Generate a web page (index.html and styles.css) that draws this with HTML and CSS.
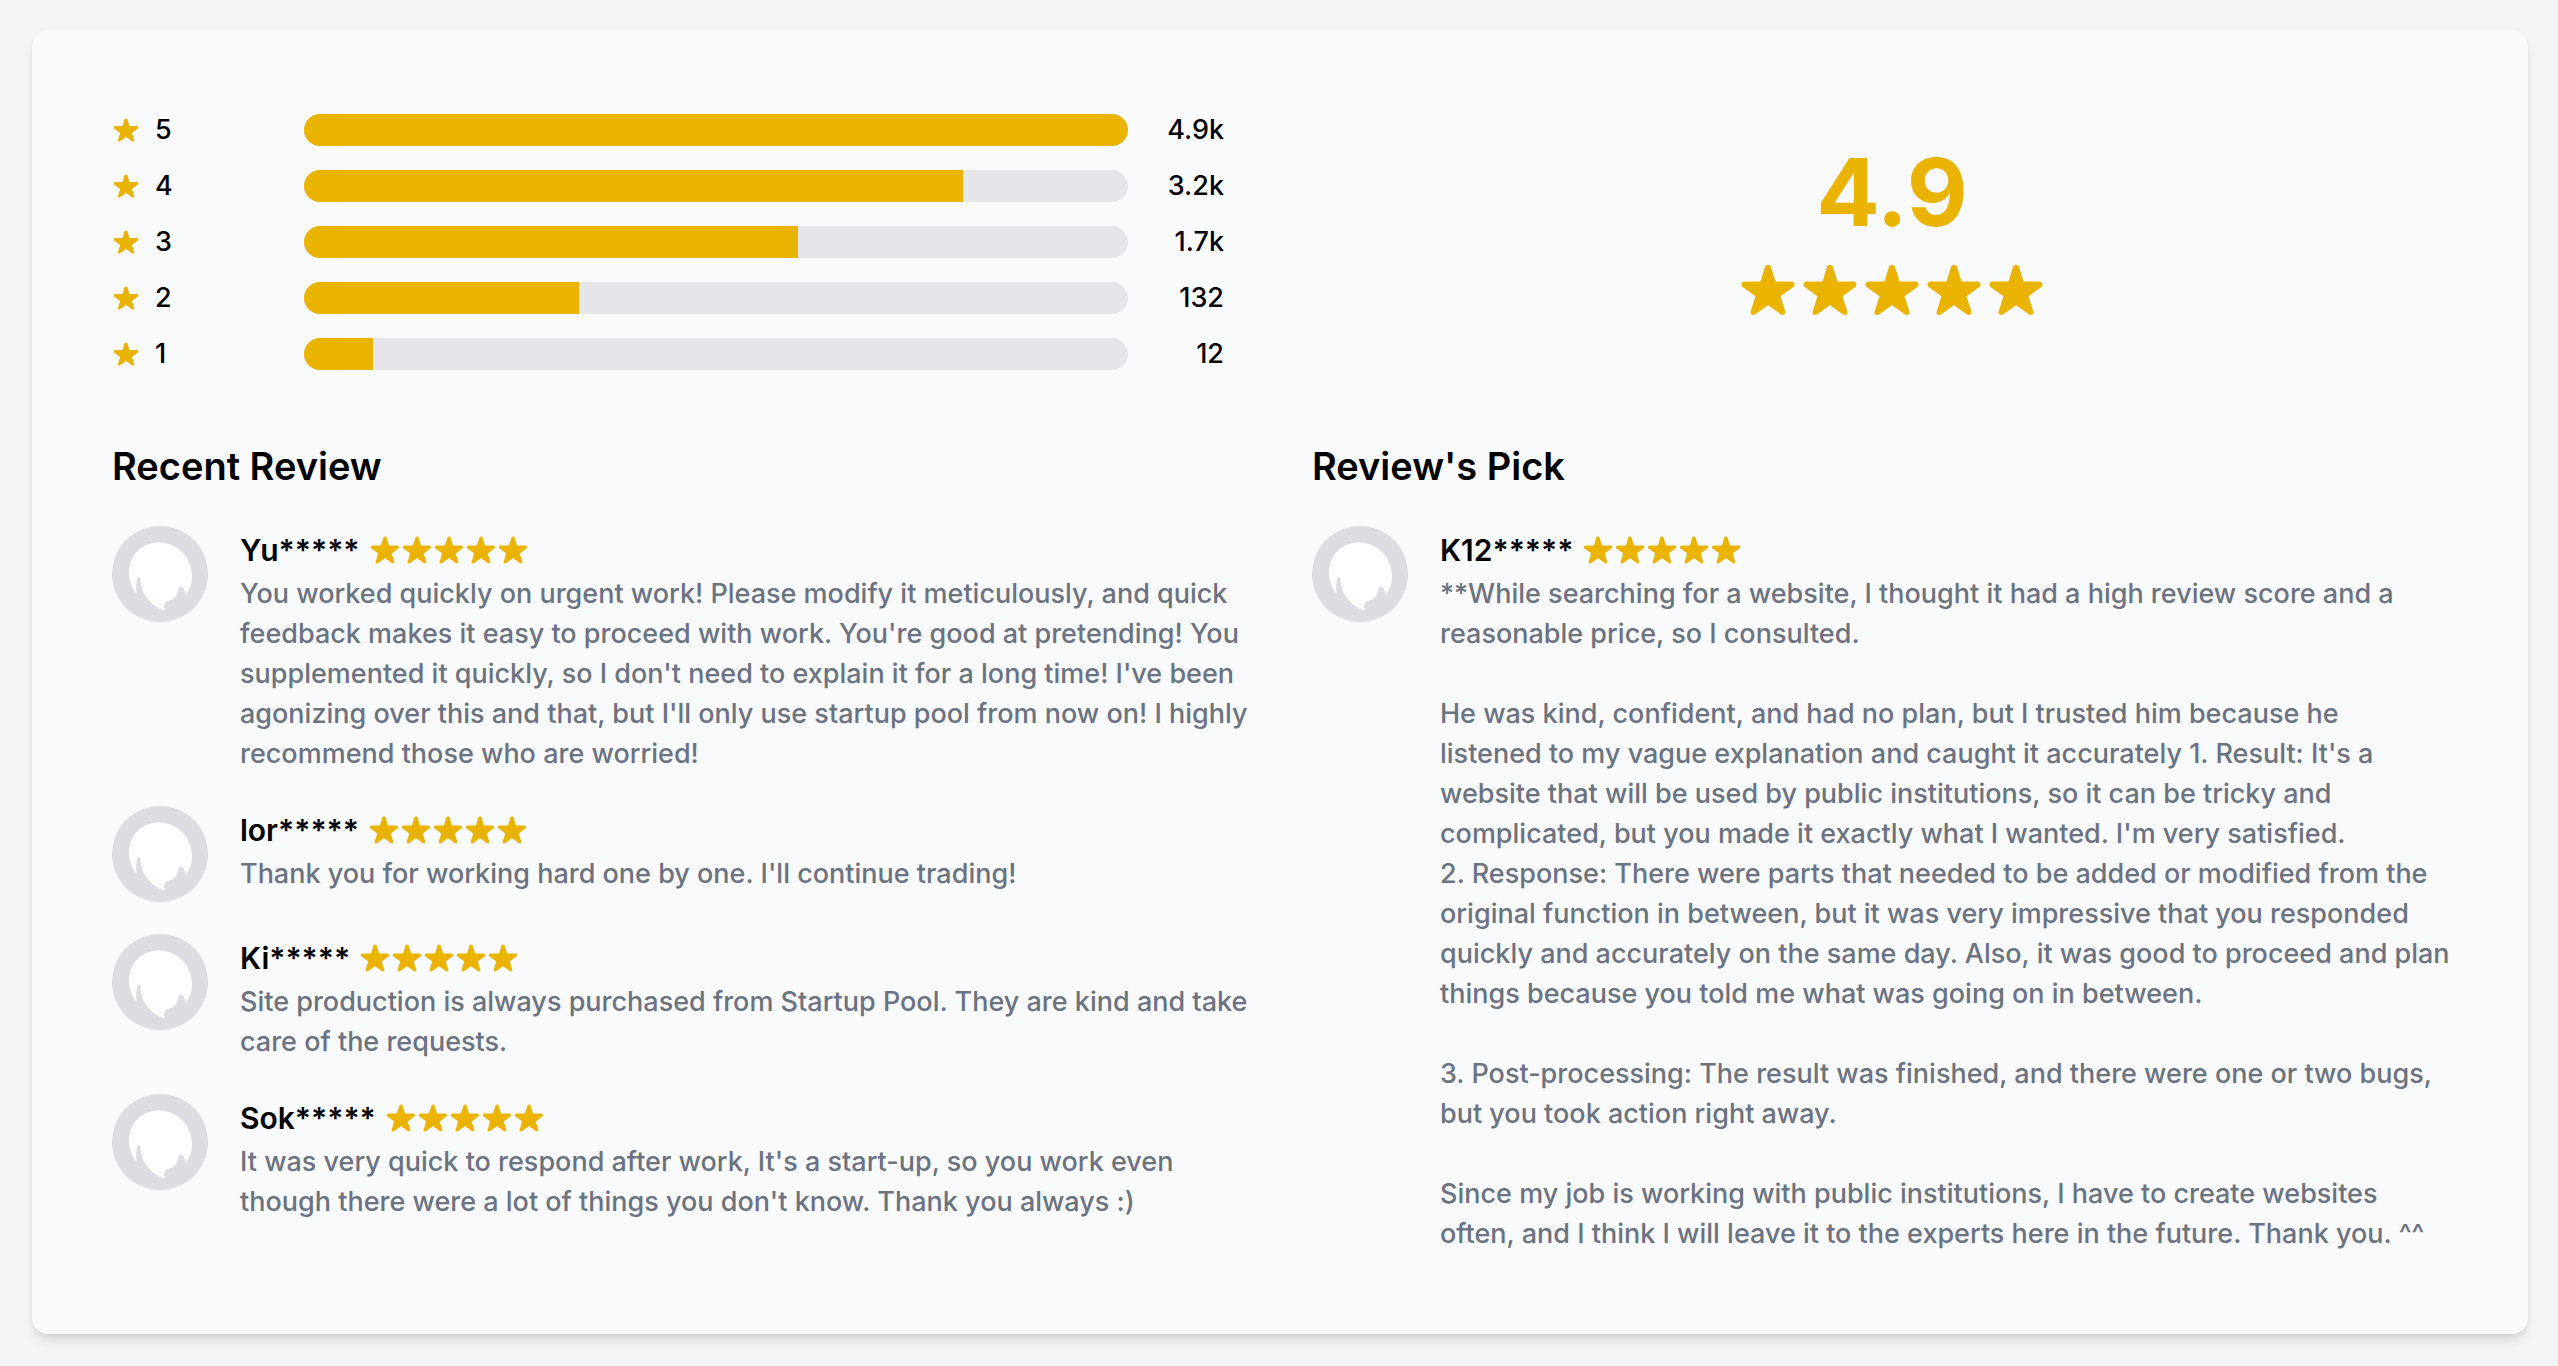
FILE: index.html
```html
<!DOCTYPE html>
<html lang="en">
<head>
<meta charset="utf-8">
<title>Reviews</title>
<link rel="stylesheet" href="styles.css">
</head>
<body>
<svg class="sprite" aria-hidden="true">
  <symbol id="star" viewBox="0 0 168 168">
    <path d="M75 15C77 7 91 7 93 15L106.500 58.500H154C164 59 167 70 159 76L121.500 103L136.500 150C138 158 129 162 122 157L84 130L46 157C39 162 30 158 31.500 150L46.500 103L9 76C1 70 4 59 14 58.500H61.500Z"/>
  </symbol>
  <symbol id="avatar" viewBox="0 0 96 96">
    <circle cx="48" cy="48" r="48" fill="#dcdde2"/>
    <path d="M24.500 68C20 62 17 54 17 47C17 29 30 16.500 47 16.500C66 16.500 80 32 80 50C80 57 78 63 73.500 69C73 64 71 60.500 69 60.500C65 60.500 67 67 64 70C61 76 52 73 52 80C52 82 53 83 52.500 84.500C42 82 28 69 28 52C27 49 25.500 51 25 54C24 59 24 64 24.500 68Z" fill="#fff"/>
  </symbol>
</svg>
<main class="card">
  <section class="summary">
    <ul class="bars">
      <li class="bar-row"><span class="grade"><svg><use href="#star"/></svg>5</span><span class="track"><span class="fill" style="width:100%"></span></span><span class="count">4.9k</span></li>
      <li class="bar-row"><span class="grade"><svg><use href="#star"/></svg>4</span><span class="track"><span class="fill" style="width:80%"></span></span><span class="count">3.2k</span></li>
      <li class="bar-row"><span class="grade"><svg><use href="#star"/></svg>3</span><span class="track"><span class="fill" style="width:60%"></span></span><span class="count">1.7k</span></li>
      <li class="bar-row"><span class="grade"><svg><use href="#star"/></svg>2</span><span class="track"><span class="fill" style="width:33.33%"></span></span><span class="count">132</span></li>
      <li class="bar-row"><span class="grade"><svg><use href="#star"/></svg>1</span><span class="track"><span class="fill" style="width:8.33%"></span></span><span class="count">12</span></li>
    </ul>
    <div class="score">
      <strong class="score-value">4.9</strong>
      <div class="score-stars"><svg><use href="#star"/></svg><svg><use href="#star"/></svg><svg><use href="#star"/></svg><svg><use href="#star"/></svg><svg><use href="#star"/></svg></div>
    </div>
  </section>
  <div class="columns">
    <section class="reviews">
      <h2>Recent Review</h2>
      <article class="review">
        <svg class="avatar"><use href="#avatar"/></svg>
        <div class="body">
          <div class="head"><h3>Yu*****</h3><div class="stars"><svg><use href="#star"/></svg><svg><use href="#star"/></svg><svg><use href="#star"/></svg><svg><use href="#star"/></svg><svg><use href="#star"/></svg></div></div>
          <p>You worked quickly on urgent work! Please modify it meticulously, and quick<br>feedback makes it easy to proceed with work. You're good at pretending! You<br>supplemented it quickly, so I don't need to explain it for a long time! I've been<br>agonizing over this and that, but I'll only use startup pool from now on! I highly<br>recommend those who are worried!</p>
        </div>
      </article>
      <article class="review">
        <svg class="avatar"><use href="#avatar"/></svg>
        <div class="body">
          <div class="head"><h3>lor*****</h3><div class="stars"><svg><use href="#star"/></svg><svg><use href="#star"/></svg><svg><use href="#star"/></svg><svg><use href="#star"/></svg><svg><use href="#star"/></svg></div></div>
          <p>Thank you for working hard one by one. I'll continue trading!</p>
        </div>
      </article>
      <article class="review">
        <svg class="avatar"><use href="#avatar"/></svg>
        <div class="body">
          <div class="head"><h3>Ki*****</h3><div class="stars"><svg><use href="#star"/></svg><svg><use href="#star"/></svg><svg><use href="#star"/></svg><svg><use href="#star"/></svg><svg><use href="#star"/></svg></div></div>
          <p>Site production is always purchased from Startup Pool. They are kind and take<br>care of the requests.</p>
        </div>
      </article>
      <article class="review">
        <svg class="avatar"><use href="#avatar"/></svg>
        <div class="body">
          <div class="head"><h3>Sok*****</h3><div class="stars"><svg><use href="#star"/></svg><svg><use href="#star"/></svg><svg><use href="#star"/></svg><svg><use href="#star"/></svg><svg><use href="#star"/></svg></div></div>
          <p>It was very quick to respond after work, It's a start-up, so you work even<br>though there were a lot of things you don't know. Thank you always :)</p>
        </div>
      </article>
    </section>
    <section class="reviews">
      <h2>Review's Pick</h2>
      <article class="review">
        <svg class="avatar"><use href="#avatar"/></svg>
        <div class="body">
          <div class="head"><h3>K12*****</h3><div class="stars"><svg><use href="#star"/></svg><svg><use href="#star"/></svg><svg><use href="#star"/></svg><svg><use href="#star"/></svg><svg><use href="#star"/></svg></div></div>
          <p>**While searching for a website, I thought it had a high review score and a<br>reasonable price, so I consulted.<br><br>He was kind, confident, and had no plan, but I trusted him because he<br>listened to my vague explanation and caught it accurately 1. Result: It's a<br>website that will be used by public institutions, so it can be tricky and<br>complicated, but you made it exactly what I wanted. I'm very satisfied.<br>2. Response: There were parts that needed to be added or modified from the<br>original function in between, but it was very impressive that you responded<br>quickly and accurately on the same day. Also, it was good to proceed and plan<br>things because you told me what was going on in between.<br><br>3. Post-processing: The result was finished, and there were one or two bugs,<br>but you took action right away.<br><br>Since my job is working with public institutions, I have to create websites<br>often, and I think I will leave it to the experts here in the future. Thank you. ^^</p>
        </div>
      </article>
    </section>
  </div>
</main>
</body>
</html>
```

FILE: styles.css
```css
* { box-sizing: border-box; }
body {
  margin: 0;
  padding: 30px 30px 32px 32px;
  background: #f3f4f6;
  color: #000;
  font: 450 27px/40px Inter, "Liberation Sans", sans-serif;
}
h2, h3, p, ul { margin: 0; padding: 0; }
.sprite { position: absolute; width: 0; height: 0; }
svg { display: block; flex: none; fill: #eab300; }
.card {
  padding: 80px;
  border-radius: 16px;
  background: #f9fafc;
  box-shadow: 0 8px 12px -2px rgba(0, 0, 0, .1), 0 4px 8px -4px rgba(0, 0, 0, .1);
}
.summary {
  display: grid;
  grid-template-columns: 1fr 1fr;
  gap: 112px;
  margin-bottom: 64px;
}
.bars { display: grid; gap: 16px; list-style: none; }
.bar-row {
  display: grid;
  grid-template-columns: 192px 1fr 96px;
  align-items: center;
}
.grade { display: flex; align-items: center; gap: 16px; }
.grade svg { width: 26px; height: 26px; margin-left: 1px; }
.track { height: 32px; border-radius: 16px; overflow: hidden; background: #e5e6ea; }
.fill { display: block; height: 100%; background: #eab300; }
.count { text-align: right; }
.score { display: flex; flex-direction: column; align-items: center; justify-content: center; }
.score-value { color: #eab300; font-size: 94px; line-height: 96px; font-weight: 700; }
.score-stars { display: flex; gap: 6px; padding: 22px 0; }
.score-stars svg { width: 56px; height: 56px; }
.columns { display: grid; grid-template-columns: 1fr 1fr; gap: 64px; }
.reviews { display: flex; flex-direction: column; gap: 32px; min-width: 0; }
h2 { font-size: 38px; line-height: 56px; font-weight: 600; }
.review { display: flex; gap: 32px; }
.avatar { width: 96px; height: 96px; }
.body { flex: 1; min-width: 0; }
.head { display: flex; align-items: center; gap: 10px; }
h3 { font-size: 30px; line-height: 48px; font-weight: 600; }
.stars { display: flex; gap: 2px; }
.stars svg { width: 30px; height: 30px; }
p { color: #6b7280; white-space: nowrap; }
```
